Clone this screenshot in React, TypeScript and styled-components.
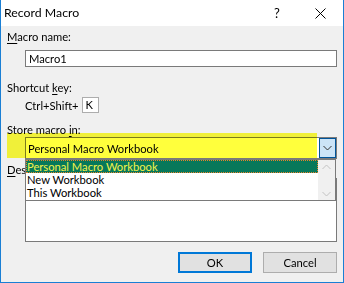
import styled, { createGlobalStyle } from 'styled-components';

const GlobalStyle = createGlobalStyle`
  html, body {
    margin: 0;
    padding: 0;
    background: #ffffff;
  }
  * {
    box-sizing: border-box;
  }
`;

// Outer dialog frame
const Window = styled.div`
  position: relative;
  width: 344px;
  height: 283px;
  background: #f0f0f0;
  border-left: 1px solid #1a7fd4;
  border-right: 1px solid #1a7fd4;
  border-bottom: 1px solid #1a7fd4;
  font-family: Lato, 'Noto Sans', sans-serif;
  font-size: 11.2px;
  color: #000;
  display: flex;
  flex-direction: column;
`;

const TitleBar = styled.div`
  height: 26px;
  background: #ffffff;
  display: flex;
  align-items: center;
  padding-left: 3px;
`;

const Title = styled.div`
  flex: 1;
  font-size: 12.3px;
  line-height: 16px;
`;

const TitleButton = styled.div<{ $w: number }>`
  width: ${(p) => p.$w}px;
  height: 26px;
  display: flex;
  align-items: center;
  justify-content: center;
  font-size: 13px;
`;

const Body = styled.div`
  position: relative;
  flex: 1;
  padding: 2px 6px 0 6px;
  display: flex;
  flex-direction: column;
`;

const Label = styled.div<{ $top: number }>`
  margin-top: ${(p) => p.$top}px;
  height: 16px;
  line-height: 16px;
`;

const Key = styled.span`
  text-decoration: underline;
  text-underline-offset: 2px;
`;

const Field = styled.div`
  margin-left: 18px;
`;

const TextBox = styled(Field)`
  margin-top: 5px;
  height: 17px;
  border: 1px solid #7a7a7a;
  background: #fff;
  padding-left: 3px;
  line-height: 15px;
`;

const ShortcutRow = styled(Field)`
  margin-top: 1px;
  display: flex;
  align-items: center;
  gap: 3px;
  height: 16px;
`;

const KeyBox = styled.div`
  width: 17px;
  height: 16px;
  border: 1px solid #adadad;
  background: #fff;
  line-height: 14px;
  padding-left: 3px;
`;

const ComboArea = styled.div`
  position: relative;
  margin-top: -1px;
`;

const Combo = styled(Field)`
  height: 22px;
  border: 1px solid #7a7a7a;
  background: #fff;
  display: flex;
  align-items: center;
  padding-left: 2px;
`;

const ComboText = styled.div`
  flex: 1;
`;

const ComboButton = styled.div`
  width: 17px;
  height: 20px;
  background: #cce4f7;
  border: 1px solid #005499;
  display: flex;
  align-items: center;
  justify-content: center;
`;

// Yellow marker annotation laid over the combo
const Highlight = styled.div`
  position: absolute;
  left: 0;
  top: -4px;
  width: 310px;
  height: 25px;
  background: #ffff3c;
  mix-blend-mode: multiply;
  pointer-events: none;
`;

const DropList = styled.div`
  position: absolute;
  left: 18px;
  top: 22px;
  width: 311px;
  height: 42px;
  background: #fff;
  border: 1px solid #7a7a7a;
  display: flex;
  z-index: 2;
`;

const Items = styled.div`
  flex: 1;
  display: flex;
  flex-direction: column;
`;

const Item = styled.div<{ $sel?: boolean }>`
  height: 13px;
  line-height: 13px;
  padding-left: 1px;
  background: ${(p) => (p.$sel ? '#07785a' : 'transparent')};
  color: ${(p) => (p.$sel ? '#f2f24a' : '#000')};
  outline: ${(p) => (p.$sel ? '1px dotted #e8822a' : 'none')};
  outline-offset: -1px;
`;

const ScrollBar = styled.div`
  width: 17px;
  background: #f0f0f0;
  display: flex;
  flex-direction: column;
  justify-content: space-between;
  align-items: center;
  padding: 4px 0 3px;
`;

const TextArea = styled(Field)`
  margin-top: 0;
  height: 64px;
  border: 1px solid #7a7a7a;
  background: #fff;
`;

const Buttons = styled.div`
  margin-top: 10px;
  display: flex;
  justify-content: flex-end;
  gap: 11px;
`;

const Button = styled.div<{ $def?: boolean }>`
  width: 74px;
  height: 21px;
  background: #e1e1e1;
  border: ${(p) => (p.$def ? '2px solid #0078d7' : '1px solid #adadad')};
  display: flex;
  align-items: center;
  justify-content: center;
`;

const Chevron = ({ up, color }: { up?: boolean; color: string }) => (
  <svg width="9" height="6" viewBox="0 0 9 6">
    <path
      d={up ? 'M0.5 5 L4.5 1 L8.5 5' : 'M0.5 1 L4.5 5 L8.5 1'}
      fill="none"
      stroke={color}
      strokeWidth="1"
    />
  </svg>
);

const App = () => {
  return (
    <>
      <GlobalStyle />
      <Window>
        <TitleBar>
          <Title>Record Macro</Title>
          <TitleButton $w={40}>?</TitleButton>
          <TitleButton $w={46}>
            <svg width="11" height="11" viewBox="0 0 11 11">
              <path d="M0.5 0.5 L10.5 10.5 M10.5 0.5 L0.5 10.5" stroke="#000" strokeWidth="1" />
            </svg>
          </TitleButton>
        </TitleBar>
        <Body>
          <Label $top={1}>
            <Key>M</Key>acro name:
          </Label>
          <TextBox>Macro1</TextBox>
          <Label $top={13}>
            Shortcut <Key>k</Key>ey:
          </Label>
          <ShortcutRow>
            <span>Ctrl+Shift+</span>
            <KeyBox>K</KeyBox>
          </ShortcutRow>
          <Label $top={9}>
            Store macro <Key>i</Key>n:
          </Label>
          <ComboArea>
            <Combo>
              <ComboText>Personal Macro Workbook</ComboText>
              <ComboButton>
                <Chevron color="#333" />
              </ComboButton>
            </Combo>
            <Highlight />
            <DropList>
              <Items>
                <Item $sel>Personal Macro Workbook</Item>
                <Item>New Workbook</Item>
                <Item>This Workbook</Item>
              </Items>
              <ScrollBar>
                <Chevron up color="#c2c2c2" />
                <Chevron color="#c2c2c2" />
              </ScrollBar>
            </DropList>
          </ComboArea>
          <Label $top={3}>
            <Key>D</Key>escription:
          </Label>
          <TextArea />
          <Buttons>
            <Button $def>OK</Button>
            <Button>Cancel</Button>
          </Buttons>
        </Body>
      </Window>
    </>
  );
};

export default App;
